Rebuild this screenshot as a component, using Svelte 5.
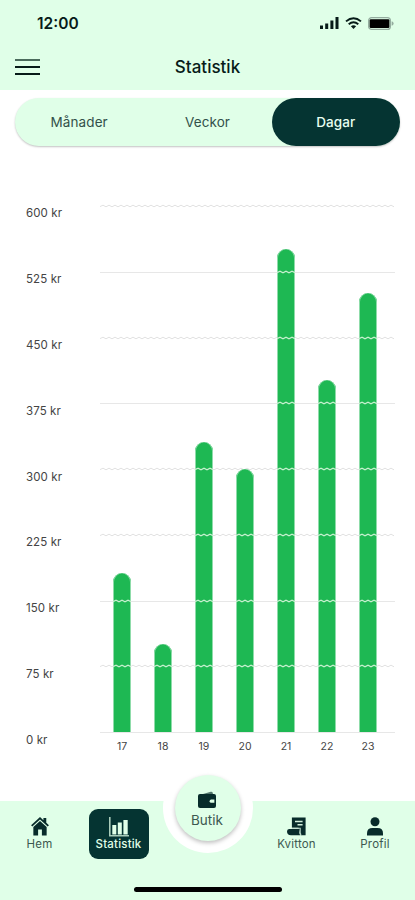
<script>
  const periods = ["Månader", "Veckor", "Dagar"];
  let period = $state("Dagar");
  let page = $state("Statistik");

  const MAX = 600;
  const ticks = [
    { value: 600, wavy: true },
    { value: 525, wavy: false },
    { value: 450, wavy: true },
    { value: 375, wavy: false },
    { value: 300, wavy: true },
    { value: 225, wavy: true },
    { value: 150, wavy: false },
    { value: 75, wavy: true },
    { value: 0, wavy: false },
  ];

  const days = [
    { day: 17, sum: 181 },
    { day: 18, sum: 100.5 },
    { day: 19, sum: 331 },
    { day: 20, sum: 300 },
    { day: 21, sum: 550.5 },
    { day: 22, sum: 401 },
    { day: 23, sum: 500.5 },
  ];

  // zigzag used for the lines, 6px per wave
  function wave(width) {
    let d = "M0 2.6";
    for (let x = 3; x <= width; x += 3) {
      d += ` L${x} ${x % 2 ? 1.2 : 2.8}`;
    }
    return d;
  }
</script>

{#snippet icon(name)}
  {#if name === "Hem"}
    <svg width="20" height="19" viewBox="0 0 20 20" fill="currentColor">
      <path d="M10 0 .6 8.6l1.3 1.4L10 2.7l8.1 7.3 1.3-1.4-2.8-2.6V1h-3v2.3z" />
      <path d="M10 4.2 3 10.5V19.4h5v-6.2h4v6.2h5v-8.9z" />
    </svg>
  {:else if name === "Statistik"}
    <svg width="20" height="20" viewBox="0 0 20 20" fill="currentColor">
      <path d="M0 0h1.6v18H20v1.5H0z" opacity=".75" />
      <path d="M3.3 8h4v9.5h-4zM8.8 5.5h4v12h-4zM14.4 3h4.3v14.5h-4.3z" />
    </svg>
  {:else if name === "Butik"}
    <svg width="19" height="18" viewBox="0 0 19 18" fill="currentColor">
      <path d="M3.3 3.4 12.8.7q1.5-.3 1.9 1.1l.3 1.6z" opacity=".65" />
      <path d="M2 3h14q2 0 2 2v10q0 2-2 2H2q-2 0-2-2V5q0-2 2-2z" />
      <path d="M13.2 8.6h3.2v3.2h-3.2a1.6 1.6 0 0 1 0-3.2z" fill="#e0ffe8" />
    </svg>
  {:else if name === "Kvitton"}
    <svg width="19" height="19" viewBox="0 0 19 19">
      <path d="M4.9.5h13.7v17.8H14l-2.5-7.6H4.9z" fill="currentColor" />
      <path d="M8 4.4h7.6M10.5 7.8h5.1" stroke="#d3efdc" stroke-width="1.5" />
      <path d="M2 11.9h10.4v4.2q0 1.2 1 2.2H4Q0 18.3 0 14.6q0-2.7 2-2.7z" fill="currentColor" />
      <path d="M4.9 11.2h8.3v4.5q0 1 1 2" fill="none" stroke="#b9d5c7" stroke-width="1.1" />
    </svg>
  {:else}
    <svg width="18" height="19" viewBox="0 0 18 19" fill="currentColor">
      <circle cx="9" cy="4.8" r="4.5" />
      <path d="M1 18.5v-2.1Q1 11 6.5 11h5Q17 11 17 16.4v2.1z" />
    </svg>
  {/if}
{/snippet}

{#snippet navItem(name)}
  <button class="item" class:active={page === name} onclick={() => (page = name)}>
    {@render icon(name)}
    <span>{name}</span>
  </button>
{/snippet}

<div class="phone">
  <header>
    <div class="status">
      <span class="time">12:00</span>
      <div class="signals">
        <svg width="19" height="12" viewBox="0 0 19 12">
          <path d="M0 8.5h3V12H0zM5.2 6.5h3V12h-3zM10.4 3.5h3V12h-3zM15.5 0h3v12h-3z" fill="#071b18" />
        </svg>
        <svg width="17" height="12" viewBox="0 0 17 12">
          <path d="M1 4.4Q8.5-2 16 4.4M3.7 7.2q4.8-4.1 9.6 0" fill="none" stroke="#071b18" stroke-width="1.9" />
          <path d="M5.9 9.2q2.6-2 5.2 0L8.5 12z" fill="#071b18" />
        </svg>
        <svg width="26" height="13" viewBox="0 0 26 13">
          <rect x=".6" y=".6" width="21.8" height="11.8" rx="3" fill="none" stroke="#94ad9f" stroke-width="1.2" />
          <rect x="1.6" y="2.3" width="19.8" height="8.6" rx="1.2" fill="#000" />
          <path d="M23.6 4.3q2 .5 2 2.2t-2 2.2z" fill="#94ad9f" />
        </svg>
      </div>
    </div>
    <div class="topbar">
      <button class="menu" aria-label="Meny"><i></i><i></i><i></i></button>
      <h1>Statistik</h1>
    </div>
  </header>

  <div class="segments">
    {#each periods as p}
      <button class:selected={period === p} onclick={() => (period = p)}>{p}</button>
    {/each}
  </div>

  <main class="chart">
    <div class="axis">
      {#each ticks as t}
        <span>{t.value} kr</span>
      {/each}
    </div>
    <div class="plot">
      <div class="lines">
        {#each ticks as t}
          <div class="line" class:wavy={t.wavy}>
            {#if t.wavy}
              <svg width="295" height="4"><path d={wave(295)} /></svg>
            {/if}
          </div>
        {/each}
      </div>
      <div class="bars">
        {#each days as d}
          <div class="bar" style="height: {(d.sum / MAX) * 100}%">
            {#each ticks as t}
              {#if t.value > 0 && t.value < d.sum - 5}
                <svg class="cut" width="18" height="4" style="top: {(1 - t.value / d.sum) * 100}%">
                  <path d={wave(18)} />
                </svg>
              {/if}
            {/each}
          </div>
        {/each}
      </div>
      <div class="days">
        {#each days as d}
          <span>{d.day}</span>
        {/each}
      </div>
    </div>
  </main>

  <nav>
    {@render navItem("Hem")}
    {@render navItem("Statistik")}
    <div class="notch">
      <button class="shop">
        {@render icon("Butik")}
        <span>Butik</span>
      </button>
    </div>
    {@render navItem("Kvitton")}
    {@render navItem("Profil")}
    <div class="home-indicator"></div>
  </nav>
</div>

<style>
  :global(body) {
    background: #fff;
  }
  .phone {
    width: 415px;
    height: 900px;
    display: flex;
    flex-direction: column;
    overflow: hidden;
    background: #fff;
    color: #082c2b;
    font-family: Inter, "Liberation Sans", sans-serif;
  }
  button {
    margin: 0;
    padding: 0;
    border: none;
    background: none;
    color: inherit;
    font: inherit;
    cursor: pointer;
  }
  svg {
    display: block;
  }
  header {
    flex: none;
    height: 90px;
    background: #e0ffe8;
  }
  .status {
    display: flex;
    align-items: center;
    justify-content: space-between;
    height: 46px;
    padding: 0 21px 0 37px;
    color: #071b18;
  }
  .time {
    font-size: 15.5px;
    font-weight: 600;
  }
  .signals {
    display: flex;
    align-items: center;
    gap: 6px;
  }
  .topbar {
    display: grid;
    grid-template-columns: 25px 1fr 25px;
    align-items: center;
    height: 41px;
    padding: 0 15px;
  }
  .menu {
    display: flex;
    flex-direction: column;
    gap: 5px;
  }
  .menu i {
    width: 25px;
    height: 2px;
    background: #071b18;
  }
  .menu i:first-child {
    background: #4b6b5c;
  }
  h1 {
    margin: 0;
    text-align: center;
    font-size: 17px;
    font-weight: 500;
    color: #071b18;
  }
  .segments {
    flex: none;
    display: grid;
    grid-template-columns: repeat(3, 1fr);
    height: 48px;
    margin: 8px 15px 0;
    border-radius: 24px;
    background: #e0ffe8;
    box-shadow: 0 1px 2px rgba(0, 0, 0, 0.24);
  }
  .segments button {
    border-radius: 24px;
    font-size: 13.5px;
    letter-spacing: 0.1px;
    color: #33514a;
  }
  .segments .selected {
    background: #053432;
    color: #e8fff0;
    font-weight: 500;
  }
  .chart {
    flex: none;
    display: flex;
    margin: 60px 20px 0 26px;
    color: #444;
  }
  .axis {
    width: 74px;
    height: 541px;
    display: flex;
    flex-direction: column;
    justify-content: space-between;
    font-size: 11.5px;
    line-height: 14px;
    letter-spacing: 0.1px;
  }
  .plot {
    flex: 1;
    position: relative;
  }
  .lines {
    position: absolute;
    inset: 0 0 auto;
    height: 527px;
    display: flex;
    flex-direction: column;
    justify-content: space-between;
  }
  .line {
    height: 1px;
    background: #e7e7e7;
  }
  .line.wavy {
    background: none;
  }
  .line svg {
    margin-top: -2px;
  }
  .line path {
    fill: none;
    stroke: #e2e2e2;
  }
  .bars {
    position: relative;
    display: grid;
    grid-template-columns: repeat(7, 41px);
    justify-items: center;
    align-items: end;
    height: 526px;
    padding-left: 1.5px;
  }
  .bar {
    position: relative;
    width: 18px;
    border-radius: 9px 9px 0 0;
    background: #1eb853;
    box-shadow: inset 1px 0 #8fdcaa, inset -1px 0 #8fdcaa;
  }
  .cut {
    position: absolute;
    left: 0;
    margin-top: -2px;
  }
  .cut path {
    fill: none;
    stroke: #c9f0d0;
    stroke-width: 1.3;
  }
  .days {
    display: grid;
    grid-template-columns: repeat(7, 41px);
    padding: 8px 0 0 1.5px;
    text-align: center;
    font-size: 10.5px;
    line-height: 14px;
  }
  nav {
    flex: none;
    position: relative;
    display: grid;
    grid-template-columns: 79px 79px 100px 77px 80px;
    justify-items: center;
    align-items: start;
    height: 99px;
    margin-top: auto;
    background: #e0ffe8;
  }
  .item {
    display: flex;
    flex-direction: column;
    align-items: center;
    width: 60px;
    height: 50px;
    margin-top: 8px;
    padding-top: 8px;
    border-radius: 9px;
    font-size: 11.5px;
    line-height: 15px;
    letter-spacing: 0.2px;
  }
  .item span {
    margin-top: auto;
    margin-bottom: 7px;
    color: #3d5850;
  }
  .item.active {
    background: #053432;
    color: #e0ffe8;
  }
  .item.active span {
    color: #e0ffe8;
    font-weight: 500;
  }
  .notch {
    width: 90px;
    height: 90px;
    margin-top: -38px;
    border-radius: 50%;
    background: #fff;
    display: grid;
    place-items: center;
  }
  .shop {
    display: flex;
    flex-direction: column;
    align-items: center;
    gap: 2px;
    width: 66px;
    height: 66px;
    padding: 16px 2px 0 0;
    border-radius: 50%;
    background: #e0ffe8;
    box-shadow: 0 2px 4px rgba(0, 0, 0, 0.25);
    font-size: 13.5px;
    line-height: 18px;
  }
  .shop span {
    color: #3d5850;
  }
  .home-indicator {
    position: absolute;
    left: 134px;
    bottom: 8px;
    width: 148px;
    height: 5px;
    border-radius: 3px;
    background: #000;
  }
</style>
